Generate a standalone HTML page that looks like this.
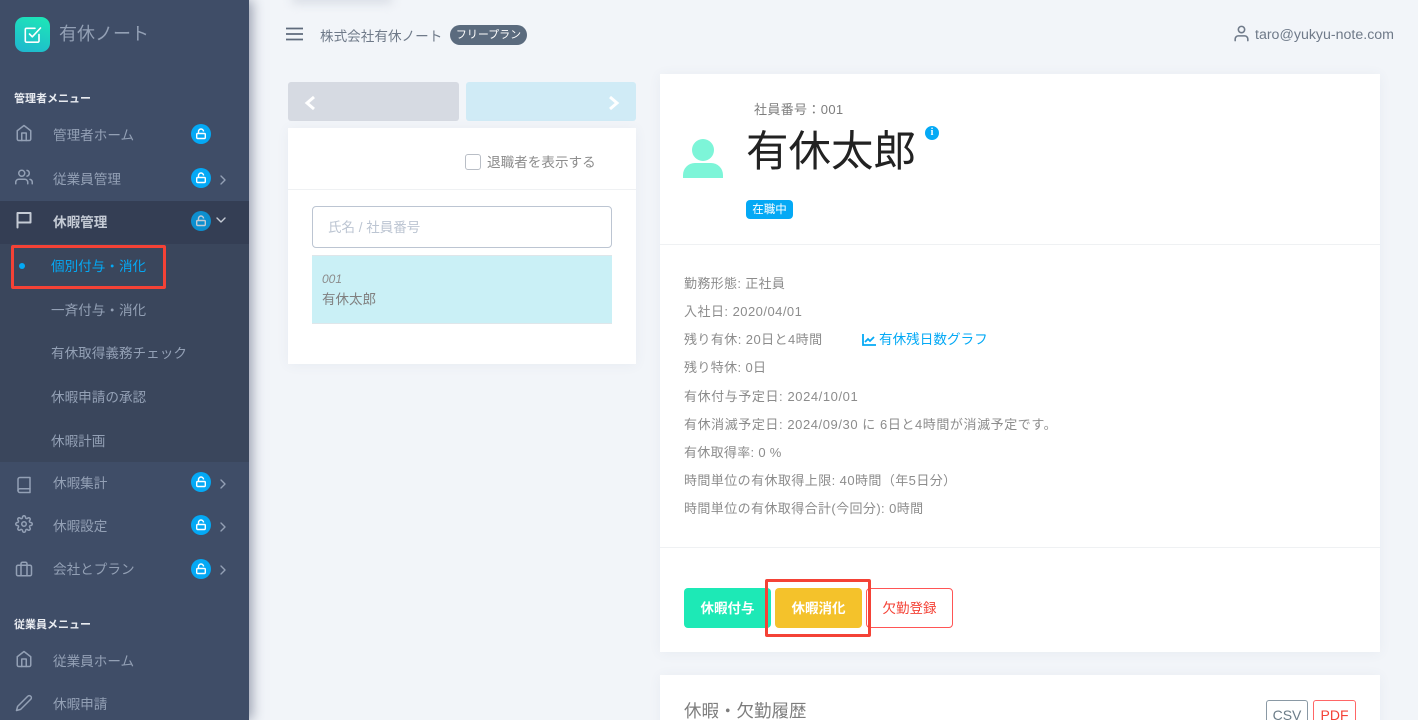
<!DOCTYPE html>
<html lang="ja"><head><meta charset="utf-8"><style>
html,body{margin:0;padding:0;width:1418px;height:720px;overflow:hidden;background:#f2f5f9}
body{position:relative;font-family:"Liberation Sans","Noto Sans CJK JP",sans-serif;font-size:13px;color:#8c8c8c}
.a,.t{position:absolute}
.t{white-space:nowrap;line-height:20px}
svg{position:absolute;fill:none}
#side{position:absolute;left:0;top:0;width:249px;height:720px;background:#3f4d67;box-shadow:3px 0 12px rgba(60,70,100,.5)}
.m{color:#93a0b5;font-size:13.6px}
.h{color:#e8ebf0;font-size:11px;font-weight:bold}
.l{position:absolute;left:191px;width:20px;height:20px;border-radius:50%;background:#04a9f5}
.l svg{left:5px;top:4px}
.ic{stroke:#93a0b5;stroke-width:2;stroke-linecap:round;stroke-linejoin:round}
.ch{stroke:#93a0b5;stroke-width:1.4;stroke-linecap:round;stroke-linejoin:round}
.card{position:absolute;background:#fff;box-shadow:0 1px 12px rgba(70,90,120,.06)}
.i{color:#8c8c8c;font-size:13px;left:684px}
.hr{position:absolute;height:1px;background:#eff1f3}
.btn{position:absolute;top:588px;height:40px;border-radius:4px;text-align:center;line-height:41px;font-size:13.5px}
</style></head><body>

<div class="a" style="left:292px;top:-6px;width:100px;height:9px;background:#d5dae2;filter:blur(5px)"></div>

<div id="side">
<div class="a" style="left:15px;top:17px;width:35px;height:35px;border-radius:9px;background:linear-gradient(20deg,#1fb5d0,#1de9b6)"></div>
<svg style="left:23px;top:25px" width="20" height="20" viewBox="0 0 20 20" stroke="#fff" stroke-width="1.6" stroke-linecap="round" stroke-linejoin="round"><path d="M16 9.5V16a1.2 1.2 0 0 1-1.2 1.2H3.5A1.2 1.2 0 0 1 2.3 16V4.5a1.2 1.2 0 0 1 1.200-1.200H12"/><path d="M6.500 9l2.800 2.800L17.500 3"/></svg>
<div class="t" style="left:59px;top:24px;font-size:18px;color:#93a0b5">有休ノート</div>

<div class="t h" style="left:14px;top:89px">管理者メニュー</div>
<div class="t m" style="left:53px;top:126px">管理者ホーム</div>
<div class="t m" style="left:53px;top:170px">従業員管理</div>

<div class="a" style="left:0;top:201px;width:249px;height:43px;background:#343e54"></div>
<div class="a" style="left:0;top:244px;width:249px;height:218px;background:#3a465c"></div>
<div class="t m" style="left:53px;top:213px;color:#c5cbd5;font-weight:bold">休暇管理</div>

<div class="a" style="left:19px;top:263px;width:6px;height:6px;border-radius:50%;background:#04a9f5"></div>
<div class="t m" style="left:51px;top:257px;color:#04a9f5">個別付与・消化</div>
<div class="t m" style="left:51px;top:301px">一斉付与・消化</div>
<div class="t m" style="left:51px;top:344px">有休取得義務チェック</div>
<div class="t m" style="left:51px;top:388px">休暇申請の承認</div>
<div class="t m" style="left:51px;top:432px">休暇計画</div>

<div class="t m" style="left:53px;top:474px">休暇集計</div>
<div class="t m" style="left:53px;top:517px">休暇設定</div>
<div class="t m" style="left:53px;top:560px">会社とプラン</div>
<div class="t h" style="left:14px;top:615px">従業員メニュー</div>
<div class="t m" style="left:53px;top:652px">従業員ホーム</div>
<div class="t m" style="left:53px;top:695px">休暇申請</div>

<div class="l" style="top:124px"><svg width="10" height="12" viewBox="0 0 10 12" stroke="#fff" stroke-width="1.400"><rect x=".7" y="5.500" width="8.600" height="5" rx="1"/><path d="M2.500 5.500V3.500a2.500 2.500 0 0 1 5 0"/></svg></div>
<div class="l" style="top:168px"><svg width="10" height="12" viewBox="0 0 10 12" stroke="#fff" stroke-width="1.400"><rect x=".7" y="5.500" width="8.600" height="5" rx="1"/><path d="M2.500 5.500V3.500a2.500 2.500 0 0 1 5 0"/></svg></div>
<div class="l" style="top:211px;background:#0d8fcf"><svg width="10" height="12" viewBox="0 0 10 12" stroke="#c5cbd5" stroke-width="1.400"><rect x=".7" y="5.500" width="8.600" height="5" rx="1"/><path d="M2.500 5.500V3.500a2.500 2.500 0 0 1 5 0"/></svg></div>
<div class="l" style="top:472px"><svg width="10" height="12" viewBox="0 0 10 12" stroke="#fff" stroke-width="1.400"><rect x=".7" y="5.500" width="8.600" height="5" rx="1"/><path d="M2.500 5.500V3.500a2.500 2.500 0 0 1 5 0"/></svg></div>
<div class="l" style="top:515px"><svg width="10" height="12" viewBox="0 0 10 12" stroke="#fff" stroke-width="1.400"><rect x=".7" y="5.500" width="8.600" height="5" rx="1"/><path d="M2.500 5.500V3.500a2.500 2.500 0 0 1 5 0"/></svg></div>
<div class="l" style="top:559px"><svg width="10" height="12" viewBox="0 0 10 12" stroke="#fff" stroke-width="1.400"><rect x=".7" y="5.500" width="8.600" height="5" rx="1"/><path d="M2.500 5.500V3.500a2.500 2.500 0 0 1 5 0"/></svg></div>

<svg class="ch" style="left:220px;top:175px" width="6" height="10" viewBox="0 0 6 10"><path d="M1 1l4 4-4 4"/></svg>
<svg class="ch" style="left:216px;top:217px;stroke:#c5cbd5" width="10" height="6" viewBox="0 0 10 6"><path d="M1 1l4 4 4-4"/></svg>
<svg class="ch" style="left:220px;top:479px" width="6" height="10" viewBox="0 0 6 10"><path d="M1 1l4 4-4 4"/></svg>
<svg class="ch" style="left:220px;top:522px" width="6" height="10" viewBox="0 0 6 10"><path d="M1 1l4 4-4 4"/></svg>
<svg class="ch" style="left:220px;top:565px" width="6" height="10" viewBox="0 0 6 10"><path d="M1 1l4 4-4 4"/></svg>

<svg class="ic" style="left:14.500px;top:124px" width="18" height="18" viewBox="0 0 24 24"><path d="M3 9l9-7 9 7v11a2 2 0 0 1-2 2H5a2 2 0 0 1-2-2z"/><path d="M9 22V12h6v10"/></svg>
<svg class="ic" style="left:14.500px;top:168px" width="18" height="18" viewBox="0 0 24 24"><path d="M17 21v-2a4 4 0 0 0-4-4H5a4 4 0 0 0-4 4v2"/><circle cx="9" cy="7" r="4"/><path d="M23 21v-2a4 4 0 0 0-3-3.870"/><path d="M16 3.130a4 4 0 0 1 0 7.750"/></svg>
<svg class="ic" style="left:16px;top:211px;stroke:#c5cbd5" width="16" height="18" viewBox="0 0 16 18"><path d="M1.500 16.500V2h13v9.500h-13"/></svg>
<svg class="ic" style="left:14.500px;top:475.500px" width="18" height="18" viewBox="0 0 24 24"><path d="M4 19.500A2.500 2.500 0 0 1 6.500 17H20"/><path d="M6.500 2H20v20H6.500A2.500 2.500 0 0 1 4 19.500v-15A2.500 2.500 0 0 1 6.500 2z"/></svg>
<svg class="ic" style="left:14.500px;top:515px" width="18" height="18" viewBox="0 0 24 24"><circle cx="12" cy="12" r="3"/><path d="M19.400 15a1.650 1.650 0 0 0 .33 1.820l.06.06a2 2 0 0 1 0 2.830 2 2 0 0 1-2.830 0l-.06-.06a1.650 1.650 0 0 0-1.820-.33 1.650 1.650 0 0 0-1 1.510V21a2 2 0 0 1-2 2 2 2 0 0 1-2-2v-.09A1.650 1.650 0 0 0 9 19.400a1.650 1.650 0 0 0-1.820.33l-.06.06a2 2 0 0 1-2.830 0 2 2 0 0 1 0-2.830l.06-.06a1.650 1.650 0 0 0 .33-1.820 1.650 1.650 0 0 0-1.510-1H3a2 2 0 0 1-2-2 2 2 0 0 1 2-2h.09A1.650 1.650 0 0 0 4.600 9a1.650 1.650 0 0 0-.33-1.820l-.06-.06a2 2 0 0 1 0-2.830 2 2 0 0 1 2.830 0l.06.06a1.650 1.650 0 0 0 1.820.33H9a1.650 1.650 0 0 0 1-1.510V3a2 2 0 0 1 2-2 2 2 0 0 1 2 2v.09a1.650 1.650 0 0 0 1 1.510 1.650 1.650 0 0 0 1.820-.33l.06-.06a2 2 0 0 1 2.830 0 2 2 0 0 1 0 2.830l-.06.06a1.650 1.650 0 0 0-.33 1.820V9a1.650 1.650 0 0 0 1.510 1H21a2 2 0 0 1 2 2 2 2 0 0 1-2 2h-.09a1.650 1.650 0 0 0-1.510 1z"/></svg>
<svg class="ic" style="left:14.500px;top:560px" width="18" height="18" viewBox="0 0 24 24"><rect x="2" y="7" width="20" height="14" rx="2"/><path d="M16 21V5a2 2 0 0 0-2-2h-4a2 2 0 0 0-2 2v16"/></svg>
<svg class="ic" style="left:14.500px;top:650px" width="18" height="18" viewBox="0 0 24 24"><path d="M3 9l9-7 9 7v11a2 2 0 0 1-2 2H5a2 2 0 0 1-2-2z"/><path d="M9 22V12h6v10"/></svg>
<svg class="ic" style="left:14.500px;top:693.500px" width="18" height="18" viewBox="0 0 24 24"><path d="M17 3a2.828 2.828 0 1 1 4 4L7.500 20.500 2 22l1.500-5.500L17 3z"/></svg>

<div class="a" style="left:10.500px;top:244.500px;width:149px;height:38px;border:3px solid #f44236;border-radius:2px"></div>
</div>

<!-- Header -->
<svg style="left:286px;top:27px" width="17" height="14" viewBox="0 0 17 14" stroke="#5f6b7c" stroke-width="1.700"><path d="M0 1.500h17M0 7h17M0 12.500h17"/></svg>
<div class="t" style="left:320px;top:27px;color:#6f7a89;font-size:13.600px">株式会社有休ノート</div>
<div class="a" style="left:450px;top:25px;width:77px;height:20px;border-radius:10px;background:#5b6b7e;color:#fff;font-size:11px;text-align:center;line-height:21px">フリープラン</div>
<svg style="left:1232px;top:24px" width="19" height="19" viewBox="0 0 24 24" stroke="#6f7a89" stroke-width="2" stroke-linecap="round" stroke-linejoin="round"><path d="M20 21v-2a4 4 0 0 0-4-4H8a4 4 0 0 0-4 4v2"/><circle cx="12" cy="7" r="4"/></svg>
<div class="t" style="left:1255px;top:25px;color:#6f7a89;font-size:14.200px">taro@yukyu-note.com</div>

<!-- Left column -->
<div class="a" style="left:288px;top:82px;width:171px;height:39px;border-radius:3px;background:#d6dae2"></div>
<div class="a" style="left:466px;top:82px;width:170px;height:39px;border-radius:3px;background:#d0ebf6"></div>
<svg style="left:304px;top:95px" width="12" height="16" viewBox="0 0 12 16" stroke="#fff" stroke-width="3"><path d="M10 2L3 8l7 6"/></svg>
<svg style="left:608px;top:95px" width="12" height="16" viewBox="0 0 12 16" stroke="#fff" stroke-width="3"><path d="M2 2l7 6-7 6"/></svg>

<div class="card" style="left:288px;top:128px;width:348px;height:236px"></div>
<div class="hr" style="left:288px;top:189px;width:348px"></div>
<div class="a" style="left:465px;top:154px;width:14px;height:14px;border:1.300px solid #b9bec6;border-radius:3px;background:#fff"></div>
<div class="t" style="left:487px;top:153px;font-size:13.600px;color:#8c8c8c">退職者を表示する</div>
<div class="a" style="left:312px;top:206px;width:298px;height:40px;border:1px solid #bcc5d2;border-radius:4px;background:#fff"></div>
<div class="t" style="left:328px;top:218px;color:#bcc5d2;font-size:13.500px">氏名 / 社員番号</div>
<div class="a" style="left:312px;top:255px;width:300px;height:67px;background:#caf0f6;border-top:1px solid #dfe6ea;border-bottom:1px solid #dfe6ea"></div>
<div class="t" style="left:322px;top:269px;font-size:12px;font-style:italic;color:#8c8c8c">001</div>
<div class="t" style="left:322px;top:290px;font-size:13.500px;color:#808080">有休太郎</div>

<!-- Right main card -->
<div class="card" style="left:660px;top:74px;width:720px;height:578px"></div>
<div class="t" style="left:754px;top:100px;font-size:13px;letter-spacing:.35px;color:#7d7d7d">社員番号：001</div>
<div class="t" style="left:746px;top:127px;font-size:42.500px;line-height:52px;color:#222">有休太郎</div>
<div class="a" style="left:925px;top:126px;width:14px;height:14px;border-radius:50%;background:#04a9f5;color:#fff;font:bold 10px/14px 'Liberation Serif',serif;text-align:center">i</div>
<svg style="left:683px;top:138px" width="40" height="41" viewBox="0 0 40 41"><circle cx="20" cy="12" r="11" style="fill:#7df5d8"/><path d="M0 40v-3a12 12 0 0 1 12-12h16a12 12 0 0 1 12 12v3z" style="fill:#7df5d8"/></svg>
<div class="a" style="left:746px;top:200px;width:47px;height:19px;border-radius:4px;background:#04a9f5;color:#fff;font-size:11.500px;text-align:center;line-height:20px">在職中</div>
<div class="hr" style="left:660px;top:244px;width:720px"></div>

<div class="t i" style="top:274px;letter-spacing:.33px">勤務形態: 正社員</div>
<div class="t i" style="top:302px;letter-spacing:.47px">入社日: 2020/04/01</div>
<div class="t i" style="top:330px;letter-spacing:.43px">残り有休: 20日と4時間</div>
<svg style="left:862px;top:334px" width="14" height="12" viewBox="0 0 14 12" stroke="#04a9f5" stroke-width="1.800"><path d="M1 0v11h13"/><path d="M3 8l3-3 2 2 4-4"/></svg>
<div class="t" style="left:879px;top:330px;color:#04a9f5;font-size:13.600px">有休残日数グラフ</div>
<div class="t i" style="top:358px;letter-spacing:.37px">残り特休: 0日</div>
<div class="t i" style="top:387px;letter-spacing:.58px">有休付与予定日: 2024/10/01</div>
<div class="t i" style="top:415px;letter-spacing:.57px">有休消滅予定日: 2024/09/30 に 6日と4時間が消滅予定です。</div>
<div class="t i" style="top:443px;letter-spacing:.3px">有休取得率: 0 %</div>
<div class="t i" style="top:471px;letter-spacing:.42px">時間単位の有休取得上限: 40時間（年5日分）</div>
<div class="t i" style="top:499px;letter-spacing:.4px">時間単位の有休取得合計(今回分): 0時間</div>

<div class="hr" style="left:660px;top:547px;width:720px"></div>
<div class="btn" style="left:684px;width:87px;background:#1de9b6;color:#fff;font-weight:bold">休暇付与</div>
<div class="btn" style="left:775px;width:87px;background:#f4c22b;color:#fff;font-weight:bold">休暇消化</div>
<div class="btn" style="left:866px;width:85px;border:1px solid #f55;color:#f44236;height:38px;line-height:39px">欠勤登録</div>
<div class="a" style="left:765px;top:579px;width:100px;height:52px;border:3px solid #f44236;border-radius:2px"></div>

<!-- History card -->
<div class="card" style="left:660px;top:675px;width:720px;height:60px"></div>
<div class="t" style="left:684px;top:701px;font-size:17.500px;color:#7d7d7d">休暇・欠勤履歴</div>
<div class="a" style="left:1266px;top:700px;width:40px;height:30px;border:1px solid #8a99a5;border-radius:3px;color:#6b7c88;text-align:center;font-size:14px;line-height:28px">CSV</div>
<div class="a" style="left:1313px;top:700px;width:41px;height:30px;border:1px solid #f66;border-radius:3px;color:#f44236;text-align:center;font-size:14px;line-height:28px">PDF</div>
</body></html>
